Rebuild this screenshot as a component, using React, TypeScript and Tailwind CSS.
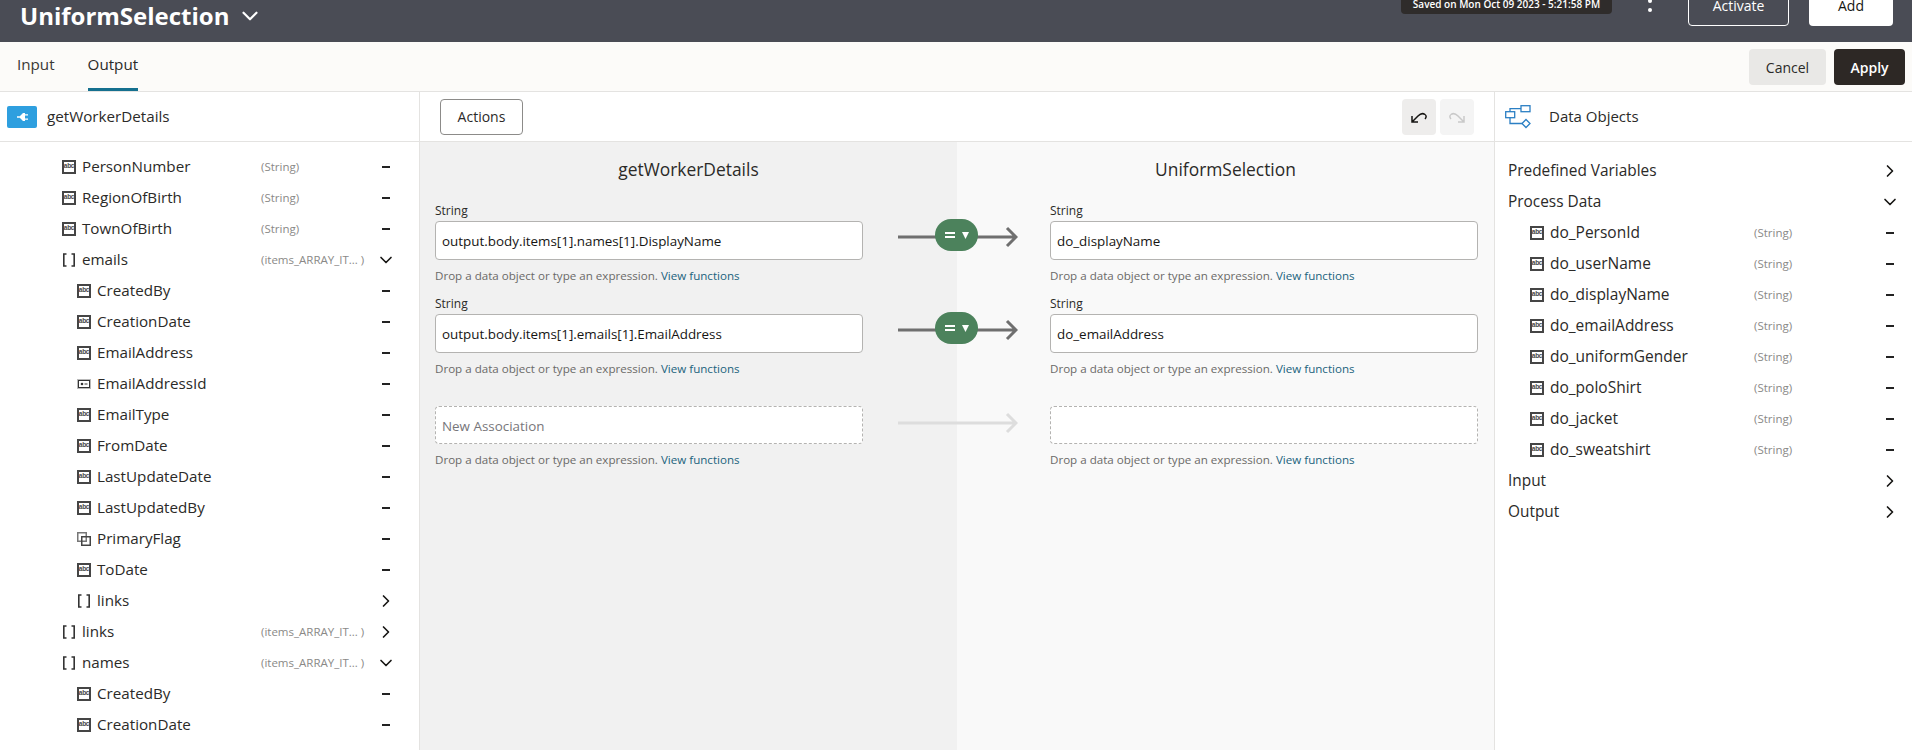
import { ChevronDown, ChevronRight } from "lucide-react";

const FONT = "font-['Open_Sans','Noto_Sans',sans-serif]";

type Kind = "abc" | "key" | "flag" | "array";

type TreeRow = {
  name: string;
  kind: Kind;
  level: number;
  type?: string;
  open?: boolean;
};

const WORKER_ROWS: TreeRow[] = [
  { name: "PersonNumber", kind: "abc", level: 0, type: "(String)" },
  { name: "RegionOfBirth", kind: "abc", level: 0, type: "(String)" },
  { name: "TownOfBirth", kind: "abc", level: 0, type: "(String)" },
  { name: "emails", kind: "array", level: 0, type: "(items_ARRAY_IT... )", open: true },
  { name: "CreatedBy", kind: "abc", level: 1 },
  { name: "CreationDate", kind: "abc", level: 1 },
  { name: "EmailAddress", kind: "abc", level: 1 },
  { name: "EmailAddressId", kind: "key", level: 1 },
  { name: "EmailType", kind: "abc", level: 1 },
  { name: "FromDate", kind: "abc", level: 1 },
  { name: "LastUpdateDate", kind: "abc", level: 1 },
  { name: "LastUpdatedBy", kind: "abc", level: 1 },
  { name: "PrimaryFlag", kind: "flag", level: 1 },
  { name: "ToDate", kind: "abc", level: 1 },
  { name: "links", kind: "array", level: 1, open: false },
  { name: "links", kind: "array", level: 0, type: "(items_ARRAY_IT... )", open: false },
  { name: "names", kind: "array", level: 0, type: "(items_ARRAY_IT... )", open: true },
  { name: "CreatedBy", kind: "abc", level: 1 },
  { name: "CreationDate", kind: "abc", level: 1 },
];

const PROCESS_DATA = [
  "do_PersonId",
  "do_userName",
  "do_displayName",
  "do_emailAddress",
  "do_uniformGender",
  "do_poloShirt",
  "do_jacket",
  "do_sweatshirt",
];

function TypeIcon({ kind }: { kind: Kind }) {
  if (kind === "abc") {
    return (
      <span className="flex h-[14px] w-[14px] shrink-0 items-center justify-center border-2 border-[#454545] bg-white font-['Liberation_Sans',sans-serif] text-[6.500px] leading-none font-bold tracking-[-0.3px] text-[#454545]">
        abc
      </span>
    );
  }
  if (kind === "key") {
    return (
      <svg width="14" height="14" viewBox="0 0 14 14" className="shrink-0">
        <rect x="0.5" y="2.5" width="13" height="9" fill="#fff" stroke="#b9b9b9" />
        <rect x="1.5" y="3.5" width="11" height="7" fill="none" stroke="#333" />
        <circle cx="5" cy="7" r="1.3" fill="#333" />
        <path d="M7.5 7h3" stroke="#333" />
      </svg>
    );
  }
  if (kind === "flag") {
    return (
      <svg width="14" height="14" viewBox="0 0 14 14" className="shrink-0">
        <rect x="0.75" y="0.75" width="8.5" height="8.5" fill="none" stroke="#777" strokeWidth="1.5" />
        <rect x="4.75" y="4.75" width="8.5" height="8.5" fill="none" stroke="#444" strokeWidth="1.5" />
      </svg>
    );
  }
  return (
    <svg width="14" height="14" viewBox="0 0 14 14" className="shrink-0">
      <path d="M4.500 1H1.800v12h2.700M9.500 1h2.700v12H9.500" fill="none" stroke="#333" strokeWidth="1.6" />
    </svg>
  );
}

function RowEnd({ open }: { open?: boolean }) {
  return (
    <span className="flex w-[16px] shrink-0 items-center justify-center text-[#161513]">
      {open === undefined ? (
        <span className="h-[2px] w-[8px] bg-[#222]" />
      ) : open ? (
        <ChevronDown size={20} strokeWidth={2} className="shrink-0" />
      ) : (
        <ChevronRight size={20} strokeWidth={2} className="shrink-0" />
      )}
    </span>
  );
}

function WorkerRow({ row }: { row: TreeRow }) {
  return (
    <div className={`flex h-[31px] items-center ${row.level === 1 ? "pl-[77px]" : "pl-[62px]"} pr-[25px]`}>
      <TypeIcon kind={row.kind} />
      <span className="ml-[6px] min-w-0 flex-1 text-[15.2px] text-[#2b2a28]">{row.name}</span>
      {row.type && <span className="w-[117px] shrink-0 text-[11.5px] whitespace-nowrap text-[#8a8987]">{row.type}</span>}
      <RowEnd open={row.open} />
    </div>
  );
}

function GroupRow({ name, open }: { name: string; open: boolean }) {
  return (
    <div className="flex h-[31px] items-center pr-[14px] pl-[13px] text-[15.4px] text-[#2b2a28]">
      <span className="flex-1">{name}</span>
      <RowEnd open={open} />
    </div>
  );
}

function Connector({ ghost }: { ghost?: boolean }) {
  const stroke = ghost ? "#dddddd" : "#6f6f6f";
  return (
    <div className="absolute top-[-2px] left-[463px] h-[24px] w-[120px]">
      <svg width="120" height="24" viewBox="0 0 120 24" className="block">
        <path d="M0 12h118M109 3l9 9-9 9" fill="none" stroke={stroke} strokeWidth="3" />
      </svg>
      {!ghost && (
        <div className="absolute top-[-6px] left-[37px] flex h-[32px] w-[43px] items-center justify-center gap-[7px] rounded-full bg-[#4c825c]">
          <span className="flex flex-col gap-[2px]">
            <span className="h-[2px] w-[10px] bg-white" />
            <span className="h-[2px] w-[10px] bg-white" />
          </span>
          <svg width="7" height="7" viewBox="0 0 7 7">
            <path d="M0 0h7L3.500 7z" fill="#fff" />
          </svg>
        </div>
      )}
    </div>
  );
}

function Hint() {
  return (
    <div className="flex h-[18px] items-center text-[11.6px] whitespace-nowrap text-[#6b6a68]">
      Drop a data object or type an expression.&nbsp;<span className="text-[#22637d]">View functions</span>
    </div>
  );
}

function Field({ value, connector }: { value: string; connector?: boolean }) {
  return (
    <div className="relative">
      <div className="flex h-[20px] items-center text-[12px] text-[#2b2a28]">String</div>
      <div className="flex h-[39px] items-center rounded-[4px] border border-[#b4b3b1] bg-white px-[6px] pt-[2px] text-[13.4px] text-[#161513]">
        {value}
      </div>
      {connector && (
        <div className="absolute top-[26px] left-0">
          <Connector />
        </div>
      )}
      <div className="pt-[7px] pb-[9px]">
        <Hint />
      </div>
    </div>
  );
}

function EmptyField({ placeholder, connector }: { placeholder?: string; connector?: boolean }) {
  return (
    <div className="relative mt-[19px]">
      <div className="flex h-[38px] items-center rounded-[4px] border border-dashed border-[#b4b3b1] bg-white px-[6px] pt-[2px] text-[13.4px] text-[#77767a]">
        {placeholder}
      </div>
      {connector && (
        <div className="absolute top-[7px] left-0">
          <Connector ghost />
        </div>
      )}
      <div className="pt-[7px]">
        <Hint />
      </div>
    </div>
  );
}

function DataObjectsIcon() {
  return (
    <svg width="26" height="24" viewBox="0 0 26 24" className="shrink-0">
      <g fill="#fff" stroke="#2b7fc4" strokeWidth="1.3">
        <rect x="16" y="0.7" width="9" height="6" />
        <rect x="0.7" y="6.7" width="9" height="6" />
        <path d="M21 14.500l4 4-4 4-4-4z" />
      </g>
      <path d="M5 6.700V3.700h11M5 12.700v5.800h12" fill="none" stroke="#2b7fc4" strokeWidth="1.3" />
    </svg>
  );
}

function PlugIcon() {
  return (
    <svg width="11" height="8" viewBox="0 0 11 8">
      <path d="M0 3.200h3v1.600H0zM3 3l3-3h2v8H6L3 5zM8 1.200h3v1.200H8zM8 5.600h3v1.200H8z" fill="#fff" />
    </svg>
  );
}

export default function App() {
  return (
    <div className={`flex h-screen flex-col overflow-hidden bg-white ${FONT}`}>
      {/* top bar, scrolled slightly out of the window */}
      <header className="flex h-[42px] shrink-0 items-end overflow-hidden bg-[#4a4c55] pr-[19px] pb-[16px] pl-[20px]">
        <div className="flex h-[32px] items-center self-start">
          <span className="text-[24px] leading-[24px] font-bold text-white">UniformSelection</span>
          <ChevronDown size={26} strokeWidth={2} className="ml-[8px] text-white" />
        </div>
        <div className="flex-1" />
        <div className="mb-[12px] flex h-[20px] w-[211px] items-center justify-center rounded-[4px] bg-[#2f2c2b] text-[10px] font-semibold whitespace-nowrap text-white">
          Saved on Mon Oct 09 2023 - 5:21:58 PM
        </div>
        <div className="mx-[36px] mb-[14px] flex flex-col gap-[5px]">
          <span className="h-[4px] w-[4px] rounded-full bg-white" />
          <span className="h-[4px] w-[4px] rounded-full bg-white" />
        </div>
        <button className="flex h-[36px] w-[101px] items-center justify-center rounded-[4px] border border-white pb-[6px] text-[14px] text-white">
          Activate
        </button>
        <button className="ml-[20px] flex h-[36px] w-[84px] items-center justify-center rounded-[4px] bg-white pb-[6px] text-[14px] text-[#161513]">
          Add
        </button>
      </header>

      <div className="flex h-[50px] shrink-0 items-center border-b border-[#e4e3e1] bg-[#fcfbf9] pr-[7px] pl-[17px]">
        <span className="flex h-[49px] items-center pb-[4px] text-[15.2px] text-[#3a3836]">Input</span>
        <span className="ml-[33px] flex h-[49px] items-center border-b-[3px] border-[#15708f] pb-[1px] text-[15.2px] text-[#2b2a28]">
          Output
        </span>
        <div className="flex-1" />
        <button className="flex h-[36px] w-[77px] items-center justify-center rounded-[4px] bg-[#e9e8e6] pt-[1px] text-[14px] text-[#2b2a28]">
          Cancel
        </button>
        <button className="ml-[8px] flex h-[36px] w-[71px] items-center justify-center rounded-[4px] bg-[#2d2825] pt-[1px] text-[14px] font-semibold text-white">
          Apply
        </button>
      </div>

      <div className="grid min-h-0 flex-1 grid-cols-[420px_1fr_418px]">
        {/* left tree */}
        <aside className="flex min-h-0 flex-col overflow-hidden border-r border-[#e4e3e1]">
          <div className="flex h-[50px] shrink-0 items-center border-b border-[#e4e3e1] pl-[7px]">
            <span className="flex h-[22px] w-[30px] items-center justify-center rounded-[2px] bg-[#2e9fdf]">
              <PlugIcon />
            </span>
            <span className="ml-[10px] text-[15.2px] text-[#2b2a28]">getWorkerDetails</span>
          </div>
          <div className="pt-[9px]">
            {WORKER_ROWS.map((row, i) => (
              <WorkerRow key={i} row={row} />
            ))}
          </div>
        </aside>

        {/* mapping canvas */}
        <main className="flex min-h-0 flex-col">
          <div className="flex h-[50px] shrink-0 items-center border-b border-[#e4e3e1] pr-[20px] pl-[20px]">
            <button className="flex h-[36px] w-[83px] items-center justify-center rounded-[4px] border border-[#8c8b89] text-[14px] text-[#2b2a28]">
              Actions
            </button>
            <div className="flex-1" />
            <button className="flex h-[36px] w-[34px] items-center justify-center rounded-[4px] bg-[#eeedec]">
              <svg width="18" height="18" viewBox="0 0 18 18">
                <path d="M2 8v6h6M2 14l6-6c2-2 5-3 7-1.500 1.500 1 1.500 3 0 4.500" fill="none" stroke="#161513" strokeWidth="1.500" />
              </svg>
            </button>
            <button className="ml-[4px] flex h-[36px] w-[34px] items-center justify-center rounded-[4px] bg-[#f4f4f4]">
              <svg width="18" height="18" viewBox="0 0 18 18">
                <path d="M16 8v6h-6M16 14l-6-6C8 6 5 5 3 6.500 1.500 7.500 1.500 9.500 3 11" fill="none" stroke="#c9c9c9" strokeWidth="1.500" />
              </svg>
            </button>
          </div>
          <div className="grid min-h-0 flex-1 grid-cols-2">
            <section className="bg-[#f1f1f1] pr-[94px] pl-[15px]">
              <h2 className="mr-[-94px] ml-[-15px] flex h-[59px] items-center justify-center pb-[5px] text-[17.4px] font-normal text-[#2b2a28]">
                getWorkerDetails
              </h2>
              <Field value="output.body.items[1].names[1].DisplayName" connector />
              <Field value="output.body.items[1].emails[1].EmailAddress" connector />
              <EmptyField placeholder="New Association" connector />
            </section>
            <section className="bg-[#f9f9f9] pr-[16px] pl-[93px]">
              <h2 className="mr-[-16px] ml-[-93px] flex h-[59px] items-center justify-center pb-[5px] text-[17.4px] font-normal text-[#2b2a28]">
                UniformSelection
              </h2>
              <Field value="do_displayName" />
              <Field value="do_emailAddress" />
              <EmptyField />
            </section>
          </div>
        </main>

        {/* data objects */}
        <aside className="flex min-h-0 flex-col overflow-hidden border-l border-[#e4e3e1]">
          <div className="flex h-[50px] shrink-0 items-center border-b border-[#e4e3e1] pl-[10px]">
            <DataObjectsIcon />
            <span className="ml-[18px] text-[15px] text-[#2b2a28]">Data Objects</span>
          </div>
          <div className="pt-[13px]">
            <GroupRow name="Predefined Variables" open={false} />
            <GroupRow name="Process Data" open />
            {PROCESS_DATA.map((name) => (
              <div key={name} className="flex h-[31px] items-center pr-[14px] pl-[35px]">
                <TypeIcon kind="abc" />
                <span className="ml-[6px] min-w-0 flex-1 text-[15.5px] text-[#2b2a28]">{name}</span>
                <span className="w-[128px] shrink-0 text-[11.5px] text-[#8a8987]">(String)</span>
                <RowEnd />
              </div>
            ))}
            <GroupRow name="Input" open={false} />
            <GroupRow name="Output" open={false} />
          </div>
        </aside>
      </div>
    </div>
  );
}
